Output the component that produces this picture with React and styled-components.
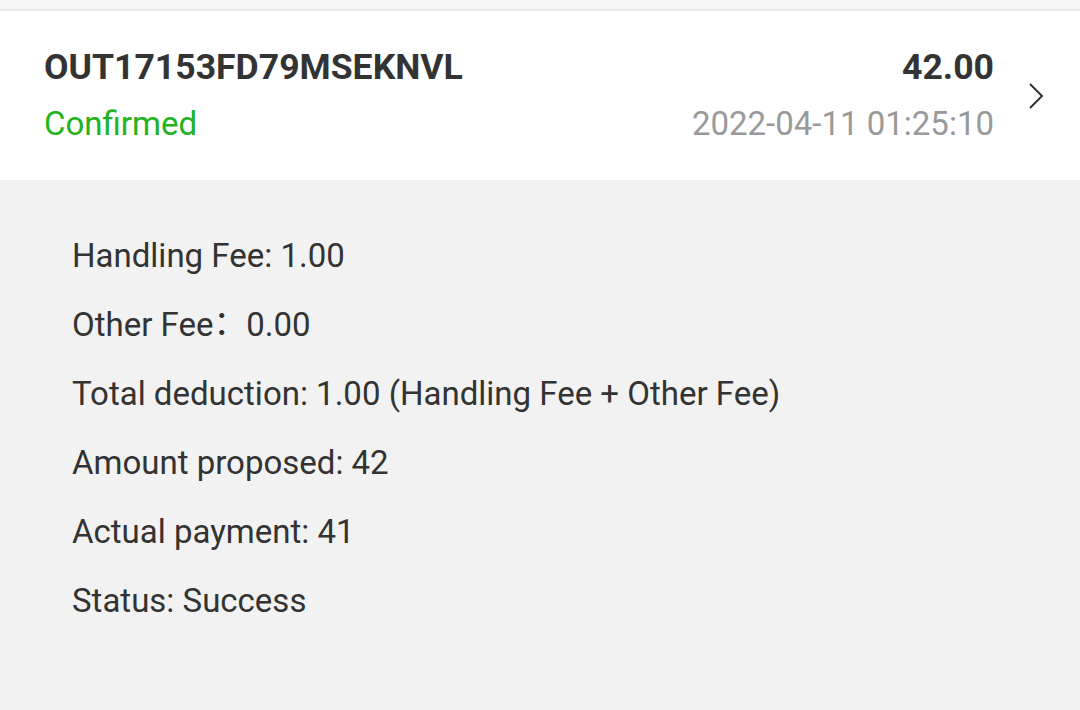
import React from 'react';
import styled, { createGlobalStyle } from 'styled-components';

const GlobalStyle = createGlobalStyle`
  html, body {
    margin: 0;
    padding: 0;
    background: #f2f2f2;
    font-family: Roboto, "Noto Sans", sans-serif;
  }
`;

const details = [
  'Handling Fee: 1.00',
  'Other Fee\uFF1A\u00A0 0.00',
  'Total deduction: 1.00 (Handling Fee + Other Fee)',
  'Amount proposed: 42',
  'Actual payment: 41',
  'Status: Success',
];

const App = () => (
  <Page>
    <GlobalStyle />
    <TopStrip />
    <Order>
      <Info>
        <Row>
          <OrderNo>OUT17153FD79MSEKNVL</OrderNo>
          <Amount>42.00</Amount>
        </Row>
        <Row>
          <Status>Confirmed</Status>
          <Time>2022-04-11 01:25:10</Time>
        </Row>
      </Info>
      <Chevron viewBox="0 0 16 28">
        <path d="M2 2 L14 14 L2 26" fill="none" stroke="#333" strokeWidth="2" />
      </Chevron>
    </Order>
    <Details>
      {details.map((line) => (
        <Line key={line}>{line}</Line>
      ))}
    </Details>
  </Page>
);

const Page = styled.div`
  width: 1080px;
  height: 710px;
  overflow: hidden;
  background: #f2f2f2;
`;

const TopStrip = styled.div`
  height: 9px;
  background: #f6f6f6;
  border-bottom: 2px solid #ececec;
`;

const Order = styled.div`
  height: 169px;
  background: #fff;
  display: flex;
  align-items: center;
  padding: 0 36px 0 44px;
  box-sizing: border-box;
`;

const Info = styled.div`
  flex: 1;
  display: flex;
  flex-direction: column;
  gap: 13px;
`;

const Row = styled.div`
  display: flex;
  justify-content: space-between;
  align-items: baseline;
`;

const OrderNo = styled.span`
  font-size: 35.6px;
  font-weight: 700;
  color: #333;
  line-height: 44px;
`;

const Amount = styled.span`
  font-size: 35.6px;
  font-weight: 700;
  color: #333;
  line-height: 44px;
`;

const Status = styled.span`
  font-size: 33px;
  color: #22b322;
  line-height: 44px;
`;

const Time = styled.span`
  font-size: 33px;
  color: #999;
  line-height: 44px;
`;

const Chevron = styled.svg`
  width: 16px;
  height: 28px;
  margin-left: 34px;
`;

const Details = styled.div`
  padding: 41px 72px 0;
  display: flex;
  flex-direction: column;
`;

const Line = styled.div`
  font-family: Roboto, "Noto Sans CJK JP", sans-serif;
  font-feature-settings: "halt";
  font-size: 33px;
  color: #333;
  line-height: 69px;
`;

export default App;
